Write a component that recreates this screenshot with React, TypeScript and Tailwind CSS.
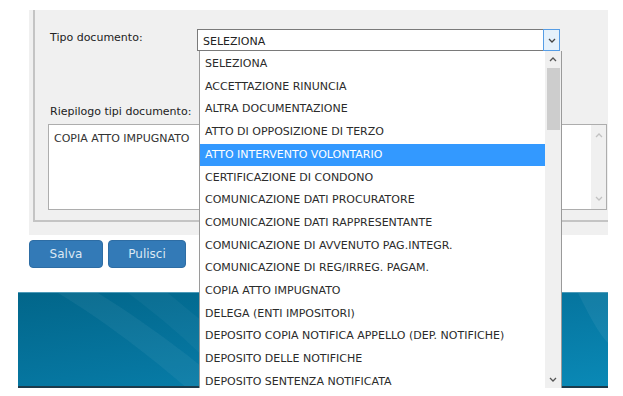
import React from 'react';

const options = [
  'SELEZIONA',
  'ACCETTAZIONE RINUNCIA',
  'ALTRA DOCUMENTAZIONE',
  'ATTO DI OPPOSIZIONE DI TERZO',
  'ATTO INTERVENTO VOLONTARIO',
  'CERTIFICAZIONE DI CONDONO',
  'COMUNICAZIONE DATI PROCURATORE',
  'COMUNICAZIONE DATI RAPPRESENTANTE',
  'COMUNICAZIONE DI AVVENUTO PAG.INTEGR.',
  'COMUNICAZIONE DI REG/IRREG. PAGAM.',
  'COPIA ATTO IMPUGNATO',
  'DELEGA (ENTI IMPOSITORI)',
  'DEPOSITO COPIA NOTIFICA APPELLO (DEP. NOTIFICHE)',
  'DEPOSITO DELLE NOTIFICHE',
  'DEPOSITO SENTENZA NOTIFICATA',
];

const selected = 4;

function Chevron({ up = false, className = '' }: { up?: boolean; className?: string }) {
  return (
    <svg width="8" height="5" viewBox="0 0 8 5" className={className}>
      <polyline
        points={up ? '1,4 4,1 7,4' : '1,1 4,4 7,1'}
        fill="none"
        stroke="currentColor"
        strokeWidth="1.3"
      />
    </svg>
  );
}

function Banner() {
  return (
    <div className="ml-[18px] mt-[24px] w-[590px] h-[96px] relative overflow-hidden border-t border-[#4c9ab8] border-b-2 border-b-[#1c3b4c] bg-gradient-to-br from-[#02668a] via-[#0676a0] to-[#0a89b6]">
      <svg className="absolute inset-0" width="590" height="96" viewBox="0 0 590 96">
        <path d="M40 0 C 90 30, 140 70, 170 96 L 210 96 C 170 60, 120 25, 80 0 Z" fill="#ffffff" opacity="0.05" />
        <path d="M110 0 C 150 30, 190 65, 215 96 L 260 96 C 225 60, 180 25, 150 0 Z" fill="#ffffff" opacity="0.04" />
        <path d="M560 0 L 590 0 L 590 50 C 580 40, 570 20, 560 0 Z" fill="#ffffff" opacity="0.06" />
      </svg>
    </div>
  );
}

export default function App() {
  return (
    <div
      className="relative w-[623px] h-[396px] bg-white overflow-hidden text-[11px] text-[#222]"
      style={{ fontFamily: "Tahoma, 'DejaVu Sans', sans-serif" }}
    >
      {/* Form panel */}
      <div className="ml-[29px] mt-[10px] w-[579px] h-[225px] bg-[#f0f0f0] pl-[4px] pb-[13px]">
        <div className="h-full border-l-2 border-b-2 border-[#c4c4c4] pl-[13px]">
          <div className="flex pt-[19px] h-[90px]">
            <div className="w-[149px] pt-px pl-[2px]">Tipo documento:</div>
            <div className="w-[363px] h-[22px] flex bg-white border border-[#7a7a7a]">
              <div className="flex-1 pl-[5px] pt-[4px] text-[#222]">SELEZIONA</div>
              <div className="w-[17px] -my-px -mr-px bg-[#e5f1fb] border border-[#569de5] flex items-center justify-center text-[#444]">
                <Chevron />
              </div>
            </div>
          </div>
          <div className="pt-[4px] h-[24px] pl-[2px]">Riepilogo tipi documento:</div>
          <div className="w-[559px] h-[86px] bg-white border border-[#adadad] flex">
            <div className="flex-1 pl-[5px] pt-[6px] text-[#333]">COPIA ATTO IMPUGNATO</div>
            <div className="w-[15px] bg-[#f0f0f0] flex flex-col items-center justify-between py-[8px] text-[#c2c2c2]">
              <Chevron up />
              <Chevron />
            </div>
          </div>
        </div>
      </div>

      {/* Buttons */}
      <div className="flex gap-[5px] ml-[29px] mt-[5px]">
        <button className="w-[74px] h-[28px] rounded-[4px] bg-[#337ab7] border border-[#2e6da4] text-[#dce8f3] text-[12px]">
          Salva
        </button>
        <button className="w-[78px] h-[28px] rounded-[4px] bg-[#337ab7] border border-[#2e6da4] text-[#dce8f3] text-[12px]">
          Pulisci
        </button>
      </div>

      <Banner />

      {/* Open dropdown list */}
      <div className="absolute left-[199px] top-[51px] w-[363px] h-[337px] bg-white border-l border-r border-[#9a9a9a] flex">
        <div className="flex-1 pt-[2px]">
          {options.map((o, i) => (
            <div
              key={o}
              className={
                i === selected
                  ? 'h-[22.7px] flex items-center pl-[5px] bg-[#3399ff] text-white'
                  : 'h-[22.7px] flex items-center pl-[5px] text-[#2b2b2b]'
              }
            >
              {o}
            </div>
          ))}
        </div>
        <div className="w-[16px] bg-[#f0f0f0] flex flex-col items-center">
          <div className="h-[17px] flex items-center justify-center text-[#555]">
            <Chevron up />
          </div>
          <div className="w-[13px] h-[62px] bg-[#cdcdcd]" />
          <div className="flex-1" />
          <div className="h-[17px] flex items-center justify-center text-[#555]">
            <Chevron />
          </div>
        </div>
      </div>
    </div>
  );
}
